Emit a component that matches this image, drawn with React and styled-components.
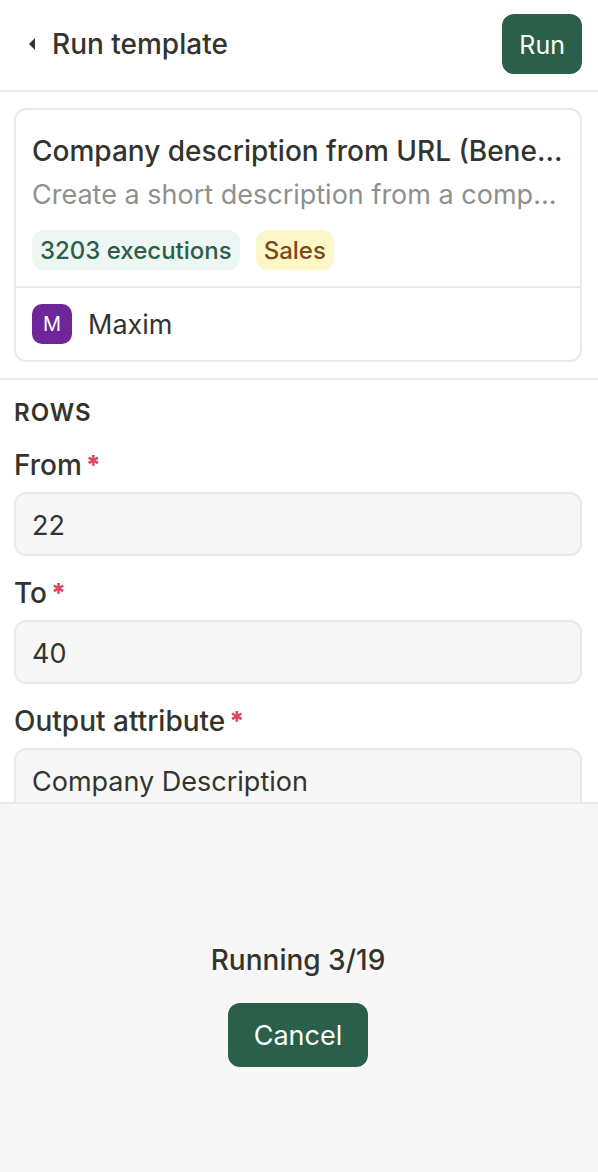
import React from "react";
import styled, { createGlobalStyle } from "styled-components";

const Global = createGlobalStyle`
  * { box-sizing: border-box; }
  body {
    margin: 0;
    background: #ffffff;
    color: #34342f;
    font-family: Inter, "Liberation Sans", sans-serif;
    font-size: 27px;
    line-height: 42px;
  }
  button, input { font: inherit; color: inherit; }
`;

const Page = styled.div`
  height: 100vh;
  display: flex;
  flex-direction: column;
`;

const Header = styled.header`
  display: flex;
  align-items: center;
  justify-content: space-between;
  padding: 14px 16px 16px;
  border-bottom: 2px solid #e9e9e9;
`;

const BackButton = styled.button`
  display: flex;
  align-items: center;
  gap: 12px;
  padding: 0 0 0 12px;
  border: 0;
  background: none;
  font-size: 28px;
  font-weight: 500;
  cursor: pointer;
`;

const Button = styled.button`
  height: ${(p) => (p.$large ? 64 : 60)}px;
  padding: 2px ${(p) => (p.$large ? 26 : 17)}px 0;
  border: 0;
  border-radius: 12px;
  background: #2a6049;
  color: #ffffff;
  font-size: ${(p) => (p.$large ? 27 : 25)}px;
  cursor: pointer;
`;

const Content = styled.main`
  flex: 1 1 0;
  min-height: 0;
  overflow: hidden;
`;

const Summary = styled.section`
  padding: 16px 16px 16px 14px;
  border-bottom: 2px solid #e9e9e9;
`;

const Card = styled.article`
  border: 2px solid #e9e9e9;
  border-radius: 12px;
`;

const CardBody = styled.div`
  padding: 20px 16px 16px;
`;

const Line = styled.p`
  margin: 0;
  overflow: hidden;
  white-space: nowrap;
  text-overflow: ellipsis;
`;

const Title = styled(Line).attrs({ as: "h2" })`
  font-size: 28px;
  font-weight: 500;
`;

const Description = styled(Line)`
  margin-top: 2px;
  color: #90908c;
`;

const Tags = styled.div`
  display: flex;
  gap: 16px;
  margin-top: 14px;
`;

const Tag = styled.span`
  padding: 2px 8px 0;
  border-radius: 12px;
  background: ${(p) => p.$background};
  color: ${(p) => p.$color};
  font-size: 24px;
  line-height: 38px;
  font-weight: 500;
`;

const Author = styled.footer`
  display: flex;
  align-items: center;
  gap: 16px;
  padding: 16px;
  border-top: 2px solid #e9e9e9;
`;

const Avatar = styled.span`
  width: 40px;
  height: 40px;
  border-radius: 10px;
  background: #70269b;
  color: #ffffff;
  font-size: 20px;
  line-height: 40px;
  text-align: center;
`;

const AuthorName = styled.span`
  padding-top: 2px;
  line-height: 38px;
`;

const Form = styled.form`
  padding: 16px 16px 16px 14px;
`;

const SectionTitle = styled.h3`
  margin: 0 0 14px;
  font-size: 24px;
  line-height: 34px;
  font-weight: 600;
  letter-spacing: 1px;
`;

const Field = styled.div`
  margin-bottom: 16px;
`;

const Label = styled.label`
  display: flex;
  gap: 4px;
  margin-bottom: 6px;
  font-size: 28px;
  font-weight: 500;
`;

const Required = styled.span`
  color: #e0455e;
  font-size: 26px;
  font-weight: 800;
`;

const Input = styled.input`
  display: block;
  width: 100%;
  height: 64px;
  padding: 2px 16px 0;
  border: 2px solid #e9e9e9;
  border-radius: 12px;
  background: #f7f7f7;
`;

const Progress = styled.section`
  flex: 0 0 370px;
  display: flex;
  flex-direction: column;
  align-items: center;
  justify-content: center;
  gap: 22px;
  padding: 30px 16px 0 14px;
  border-top: 2px solid #e9e9e9;
  background: #f7f7f7;
`;

const Status = styled(Line)`
  font-size: 28px;
  font-weight: 500;
`;

const fields = [
  { id: "from", label: "From", value: "22" },
  { id: "to", label: "To", value: "40" },
  { id: "output", label: "Output attribute", value: "Company Description" },
];

export default function App() {
  return (
    <Page>
      <Global />
      <Header>
        <BackButton type="button">
          <svg width="12" height="14" viewBox="0 0 12 14" aria-hidden="true">
            <path d="M7 1v12L1 7z" fill="#34342f" />
          </svg>
          Run template
        </BackButton>
        <Button type="submit" form="run-form">Run</Button>
      </Header>
      <Content>
        <Summary>
          <Card>
            <CardBody>
              <Title>Company description from URL (Benefits)</Title>
              <Description>Create a short description from a company URL</Description>
              <Tags>
                <Tag $background="#eef6f4" $color="#2a6049">3203 executions</Tag>
                <Tag $background="#fdf7c8" $color="#7b4a1c">Sales</Tag>
              </Tags>
            </CardBody>
            <Author>
              <Avatar>M</Avatar>
              <AuthorName>Maxim</AuthorName>
            </Author>
          </Card>
        </Summary>
        <Form id="run-form" onSubmit={(e) => e.preventDefault()}>
          <SectionTitle>ROWS</SectionTitle>
          {fields.map((f) => (
            <Field key={f.id}>
              <Label htmlFor={f.id}>
                {f.label}
                <Required>*</Required>
              </Label>
              <Input id={f.id} defaultValue={f.value} required />
            </Field>
          ))}
        </Form>
      </Content>
      <Progress>
        <Status role="status">Running 3/19</Status>
        <Button type="button" $large>Cancel</Button>
      </Progress>
    </Page>
  );
}
